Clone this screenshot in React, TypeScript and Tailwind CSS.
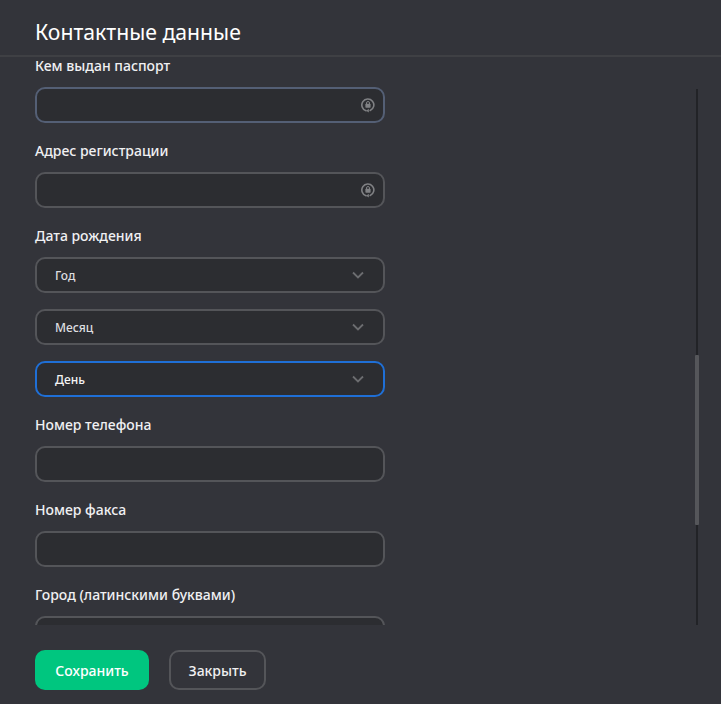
import React from "react";

function LockIcon() {
  return (
    <svg width="14" height="15" viewBox="0 0 14 15" fill="none" className="mt-[1px] shrink-0">
      <path d="M5 12.7A6 6 0 1 1 9.2 12.5" stroke="#808184" strokeWidth="1.6" strokeLinecap="round" />
      <path d="M7.8 10.8l-2.6 1.9 2.6 1.9z" fill="#808184" />
      <rect x="4.4" y="5.8" width="5.2" height="4" rx="0.7" fill="#808184" />
      <path d="M5.5 6V5a1.5 1.5 0 0 1 3 0v1" stroke="#808184" strokeWidth="1" />
    </svg>
  );
}

function Chevron() {
  return (
    <svg width="12" height="8" viewBox="0 0 12 8" fill="none" className="shrink-0">
      <path d="M1 1.5l5 5 5-5" stroke="#6c6d70" strokeWidth="1.8" />
    </svg>
  );
}

function Label({ children }: { children: React.ReactNode }) {
  return <div className="h-5 text-[14px] leading-[22px] font-medium text-[#f0f0f2]">{children}</div>;
}

function Input({ icon, border = "border-[#545559]" }: { icon?: boolean; border?: string }) {
  return (
    <div className={`mt-[12px] flex h-9 w-[350px] shrink-0 items-center justify-end rounded-[10px] border-2 bg-[#2c2d31] pr-[8px] ${border}`}>
      {icon && <LockIcon />}
    </div>
  );
}

function Select({ text, active }: { text: string; active?: boolean }) {
  return (
    <div
      className={`flex h-9 w-[350px] items-center justify-between rounded-[10px] border-2 bg-[#2c2d31] pl-[18px] pr-[19px] text-[12px] font-medium ${
        active ? "border-[#1f6fd6] text-[#f4f4f5]" : "border-[#545559] text-[#dedee0]"
      }`}
    >
      <span className="pt-[2px]">{text}</span>
      <Chevron />
    </div>
  );
}

export default function App() {
  return (
    <div className="relative flex h-[704px] w-[721px] flex-col overflow-hidden bg-[#33343a] font-['Noto_Sans',sans-serif]">
      <div className="h-[57px] shrink-0 border-b-2 border-[#3f4044] pl-[35px] pt-[15px] text-[21.2px] leading-[34px] text-white">
        Контактные данные
      </div>
      <div className="h-[568px] shrink-0 overflow-hidden pl-[35px]">
        <div className="-mt-[2px] flex flex-col">
          <Label>Кем выдан паспорт</Label>
          <Input icon border="border-[#545f75]" />
          <div className="mt-[17px]"><Label>Адрес регистрации</Label></div>
          <Input icon />
          <div className="mt-[17px]"><Label>Дата рождения</Label></div>
          <div className="mt-[12px] flex flex-col gap-4">
            <Select text="Год" />
            <Select text="Месяц" />
            <Select text="День" active />
          </div>
          <div className="mt-[17px]"><Label>Номер телефона</Label></div>
          <Input />
          <div className="mt-[17px]"><Label>Номер факса</Label></div>
          <Input />
          <div className="mt-[17px]"><Label>Город (латинскими буквами)</Label></div>
          <Input />
        </div>
      </div>
      <div className="flex gap-5 pl-[35px] pt-[25px]">
        <button className="h-10 w-[114px] rounded-[10px] bg-[#00c67f] text-[14px] font-medium text-white">Сохранить</button>
        <button className="h-10 w-[97px] rounded-[10px] border-2 border-[#545559] text-[14px] font-medium text-[#f0f0f1]">Закрыть</button>
      </div>
      <div className="absolute left-[696px] top-[89px] h-[536px] w-[2px] bg-[#222327]" />
      <div className="absolute left-[695px] top-[355px] h-[170px] w-1 rounded-[1px] bg-[#55565a]" />
    </div>
  );
}
